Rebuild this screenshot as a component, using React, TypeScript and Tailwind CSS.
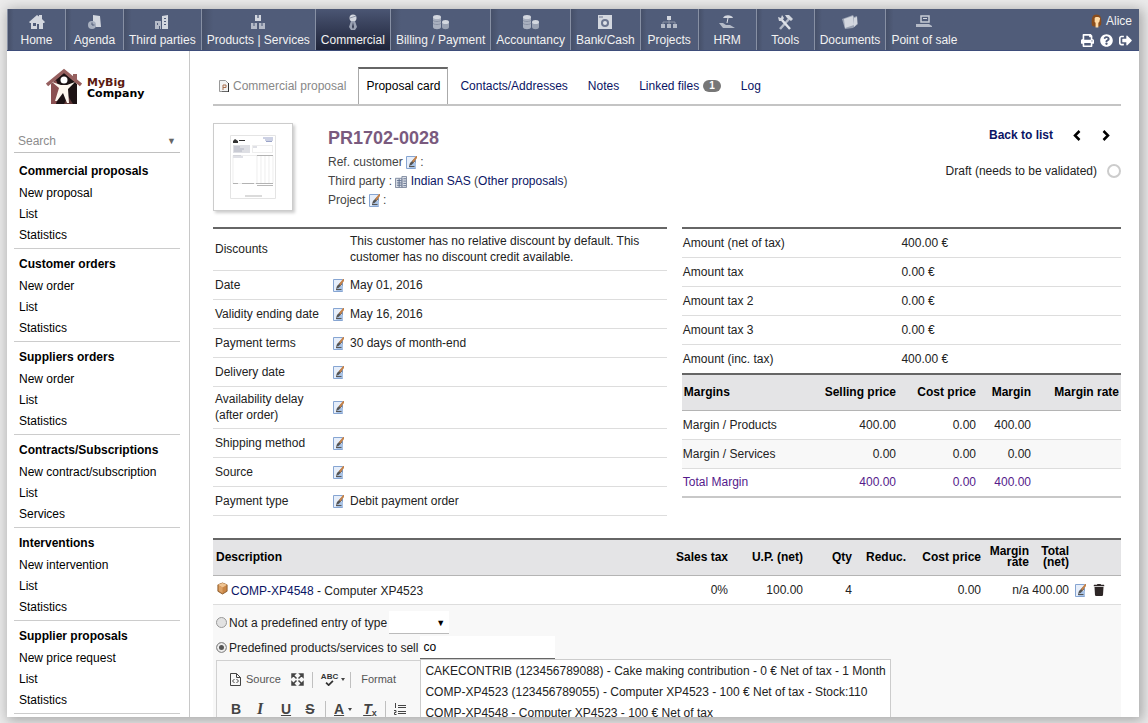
import React from 'react';
import { FaPrint, FaQuestionCircle, FaSignOutAlt, FaTrash } from 'react-icons/fa';

type IconName =
  | 'home' | 'agenda' | 'companies' | 'products' | 'commercial' | 'coins'
  | 'safe' | 'projects' | 'hrm' | 'tools' | 'folder' | 'pos';

interface MenuItem {
  label: string;
  icon: IconName;
  active?: boolean;
}

const MENU: MenuItem[] = [
  { label: 'Home', icon: 'home' },
  { label: 'Agenda', icon: 'agenda' },
  { label: 'Third parties', icon: 'companies' },
  { label: 'Products | Services', icon: 'products' },
  { label: 'Commercial', icon: 'commercial', active: true },
  { label: 'Billing / Payment', icon: 'coins' },
  { label: 'Accountancy', icon: 'coins' },
  { label: 'Bank/Cash', icon: 'safe' },
  { label: 'Projects', icon: 'projects' },
  { label: 'HRM', icon: 'hrm' },
  { label: 'Tools', icon: 'tools' },
  { label: 'Documents', icon: 'folder' },
  { label: 'Point of sale', icon: 'pos' },
];

const SIDE_MENU = [
  { title: 'Commercial proposals', links: ['New proposal', 'List', 'Statistics'] },
  { title: 'Customer orders', links: ['New order', 'List', 'Statistics'] },
  { title: 'Suppliers orders', links: ['New order', 'List', 'Statistics'] },
  { title: 'Contracts/Subscriptions', links: ['New contract/subscription', 'List', 'Services'] },
  { title: 'Interventions', links: ['New intervention', 'List', 'Statistics'] },
  { title: 'Supplier proposals', links: ['New price request', 'List', 'Statistics'] },
];

const FIELDS = [
  { label: 'Discounts', value: 'This customer has no relative discount by default. This customer has no discount credit available.', tall: true },
  { label: 'Date', value: 'May 01, 2016', edit: true },
  { label: 'Validity ending date', value: 'May 16, 2016', edit: true },
  { label: 'Payment terms', value: '30 days of month-end', edit: true },
  { label: 'Delivery date', value: '', edit: true },
  { label: 'Availability delay (after order)', value: '', edit: true, tall: true },
  { label: 'Shipping method', value: '', edit: true },
  { label: 'Source', value: '', edit: true },
  { label: 'Payment type', value: 'Debit payment order', edit: true },
];

const AMOUNTS = [
  ['Amount (net of tax)', '400.00 €'],
  ['Amount tax', '0.00 €'],
  ['Amount tax 2', '0.00 €'],
  ['Amount tax 3', '0.00 €'],
  ['Amount (inc. tax)', '400.00 €'],
];

const MARGINS = [
  ['Margin / Products', '400.00', '0.00', '400.00'],
  ['Margin / Services', '0.00', '0.00', '0.00'],
  ['Total Margin', '400.00', '0.00', '400.00'],
];

const SUGGESTIONS = [
  'CAKECONTRIB (123456789088) - Cake making contribution - 0 € Net of tax - 1 Month',
  'COMP-XP4523 (123456789055) - Computer XP4523 - 100 € Net of tax - Stock:110',
  'COMP-XP4548 - Computer XP4523 - 100 € Net of tax',
];

const MENU_SHAPES: Record<IconName, React.ReactNode> = {
  home: (
    <>
      <path d="M0 8 L8 1 L10 2.500 V1 H13 V5 L16 8 L15 9 H14 V15 H10 V10 H8 V15 H2 V9 H1 Z" />
      <path d="M4 9h3v3H4z" fill="#505c79" />
    </>
  ),
  agenda: (
    <>
      <path d="M6 1 L13 2 L14 13 H9 L6 8 Z" />
      <circle cx="5" cy="11" r="4" fill="#a9b1c0" />
      <path d="M5 8.500V11h2.500" stroke="#505c79" fill="none" />
    </>
  ),
  companies: (
    <>
      <path d="M1 7h6v8H1z" fill="#b4bac7" />
      <path d="M8 2l6-1v14H8z" />
      <path d="M3 9h1v2H3zM5 12h1v3H5zM10 4h2v1h-2zM10 7h2v1h-2zM10 10h2v1h-2z" fill="#505c79" />
    </>
  ),
  products: (
    <>
      <path d="M5 1h6v6H5z" />
      <path d="M1 9h6v6H1zM9 9h6v6H9z" fill="#b4bac7" />
      <path d="M7 1h2v3H7zM3 9h2v3H3zM11 9h2v3h-2z" fill="#7d879d" />
    </>
  ),
  commercial: (
    <>
      <circle cx="8" cy="4" r="3.500" />
      <path d="M6 7h4l2 6-2 3H6l-2-3z" fill="#9aa2b3" />
      <path d="M8 8l1 5-1 2-1-2z" fill="#343b52" />
      <path d="M5 4l6-2" stroke="#8b93a6" />
    </>
  ),
  coins: (
    <>
      <path d="M0 3v10c0 3 8 3 8 0V3z" fill="#a9b0bf" />
      <ellipse cx="4" cy="3" rx="4" ry="2" />
      <path d="M0 6c0 2 8 2 8 0M0 9c0 2 8 2 8 0" stroke="#8b93a6" fill="none" />
      <path d="M9 8v5c0 3 7 3 7 0V8z" fill="#9aa2b3" />
      <ellipse cx="12.500" cy="8" rx="3.500" ry="2" />
    </>
  ),
  safe: (
    <>
      <path d="M1 1h14v14H1z" />
      <circle cx="8" cy="9" r="4" fill="#6c7690" />
      <circle cx="8" cy="9" r="2" fill="#dfe2e8" />
      <path d="M2 3h4" stroke="#6c7690" />
    </>
  ),
  projects: (
    <>
      <path d="M6 2h4v4H6z" />
      <path d="M0 10h4v4H0zM6 10h4v4H6zM12 10h4v4h-4z" fill="#b4bac7" />
      <path d="M8 6v4M2 10V8h12v2" stroke="#8b93a6" fill="none" />
    </>
  ),
  hrm: (
    <>
      <path d="M4 4c2-4 9-3 10 0z" />
      <path d="M9 4l-1 5" stroke="#dfe2e8" />
      <path d="M0 9l4 0 3 2h4l5 3H4z" fill="#b4bac7" />
    </>
  ),
  tools: (
    <>
      <path d="M3 15L12 5" stroke="#b4bac7" strokeWidth="2.500" />
      <path d="M13 15L4 5" stroke="#dfe2e8" strokeWidth="2.500" />
      <path d="M1 3l3 1 1-3 2 3-2 3H2zM8 1h4l4 4-2 2-4-3z" />
    </>
  ),
  folder: (
    <>
      <path d="M0 5l11-4 1 2 3-1 1 8-5 4-8 1z" fill="#9aa2b3" />
      <path d="M2 5l9-3 1 9-9 3zM12 4l3-1v7l-3 3z" />
    </>
  ),
  pos: (
    <>
      <path d="M5 2h8v6H5z" fill="none" stroke="#c6cbd5" strokeWidth="1.500" />
      <path d="M7 4h4v1H7z" />
      <path d="M0 10h13l3 2v1H0z" fill="#b4bac7" />
    </>
  ),
};

const MenuIcon: React.FC<{ name: IconName }> = ({ name }) => (
  <svg viewBox="0 0 16 16" className="h-4 w-4" fill="#d3d7df" aria-hidden="true">
    {MENU_SHAPES[name]}
  </svg>
);

const EditIcon: React.FC = () => (
  <svg viewBox="0 0 11 13" className="inline-block h-[13px] w-[11px] align-middle" aria-hidden="true">
    <path d="M.5.5h9v12h-9z" fill="#e6eefa" stroke="#86a5d2" />
    <path d="M6 7h4v5H3z" fill="#a9c3e6" />
    <path d="M3 10l1-3 4-4 1.500 2-4 4z" fill="#555" />
    <path d="M6 5l4-5h1v2L7.500 6.500z" fill="#c4824a" />
    <path d="M3 10.500h5.500" stroke="#555" />
  </svg>
);

const EditButton: React.FC<{ label: string }> = ({ label }) => (
  <button type="button" aria-label={label} className="inline-flex align-middle">
    <EditIcon />
  </button>
);

const Chevron: React.FC<{ path: string }> = ({ path }) => (
  <svg viewBox="0 0 8 11" className="h-[11px] w-2" fill="none" stroke="#000" strokeWidth="2.500" aria-hidden="true">
    <path d={path} />
  </svg>
);

const Logo: React.FC = () => (
  <a href="#" className="flex items-center gap-[5px]" aria-label="MyBig Company">
    <svg viewBox="0 0 36 36" className="h-9 w-9" aria-hidden="true">
      <path d="M27 6h4v9h-4z" fill="#96605f" />
      <path d="M5 16L18 4l13 12v20H5z" fill="#1c1214" />
      <path d="M5 16l5-4 4 10-4 14H5z" fill="#8a4f50" />
      <path d="M22 28l5 8h-9z" fill="#5c3535" />
      <path d="M1 17L18 3l17 14" fill="none" stroke="#96605f" strokeWidth="3.500" />
      <circle cx="18" cy="12" r="3.500" fill="#fff" />
      <path d="M6 14l9 3h6l8-3-7 7 1 14-2 0-4-10-6 8-2 0 4-13z" fill="#fdf6ee" />
    </svg>
    <span className="mt-1 font-['DejaVu_Sans',sans-serif] text-[11px] leading-[11px] font-bold text-black">
      <span className="block text-[#5b1a10]">MyBig</span>
      <span className="block">Company</span>
    </span>
  </a>
);

const TopBar: React.FC = () => (
  <header className="flex h-[42px] shrink-0 justify-between border-b border-[#3e4d7a] bg-[#505c79] text-xs text-[#f2f2f2]">
    <nav className="flex">
      {MENU.map((item) => (
        <a
          key={item.label}
          href="#"
          className={`flex min-w-[58px] flex-col items-center gap-[2px] border-l border-l-[#8790a4] px-[5px] pt-[5px] ${
            item.active ? 'bg-linear-to-b from-[#4b5674] to-[#1f2439]' : 'bg-linear-to-r from-[#465069] to-[#505c79] to-10%'
          }`}
        >
          <MenuIcon name={item.icon} />
          <span className="leading-4 whitespace-nowrap">{item.label}</span>
        </a>
      ))}
    </nav>
    <div className="flex flex-col items-end gap-[5px] pt-1 pr-[7px]">
      <a href="#" className="flex items-center gap-1 leading-4">
        <svg viewBox="0 0 12 14" className="h-[14px] w-[11px]" aria-hidden="true">
          <path d="M1 12C0 3 2 0 6 0s6 3 5 11l-2 2H3z" fill="#8a4d1c" />
          <path d="M4 4c0-2 5-2 6 0l-1 4-1 1v5H5V9L4 8z" fill="#ffdba6" />
        </svg>
        Alice
      </a>
      <div className="flex items-center gap-[6px] text-[13px] text-white">
        <button type="button" aria-label="Print"><FaPrint /></button>
        <button type="button" aria-label="Help"><FaQuestionCircle /></button>
        <button type="button" aria-label="Logout"><FaSignOutAlt /></button>
      </div>
    </div>
  </header>
);

const Sidebar: React.FC = () => (
  <aside className="w-[183px] shrink-0 overflow-hidden border-r border-[#c8c8c8] pr-[9px] pl-[7px] text-black">
    <div className="pt-[17px] pl-8">
      <Logo />
    </div>
    <div className="mt-[25px] mb-[3px] flex h-[24px] items-center justify-between border-b border-[#c0c0c0] pr-1 pl-1">
      <input type="text" aria-label="Search" placeholder="Search" className="w-28 outline-none placeholder:text-[#8c8c8c]" />
      <button type="button" aria-label="Search in" className="text-[9px] text-[#666]">▼</button>
    </div>
    {SIDE_MENU.map((group) => (
      <div key={group.title} className="border-b border-[#ccc] px-[5px] pt-1 pb-[2px]">
        <a href="#" className="block leading-[23px] font-bold whitespace-nowrap">{group.title}</a>
        {group.links.map((link) => (
          <a key={link} href="#" className="block leading-[21px] whitespace-nowrap">{link}</a>
        ))}
      </div>
    ))}
  </aside>
);

const Tabs: React.FC = () => (
  <nav className="flex h-[39px] items-stretch border-b-2 border-[#c4c4c4] leading-[38px] text-[#0a1464]">
    <span className="flex items-center gap-1 pr-3 pl-[6px] text-[#888]">
      <svg viewBox="0 0 10 12" className="h-3 w-[10px]" aria-hidden="true">
        <path d="M.5.5h6l3 3v8h-9z" fill="#f3f3f3" stroke="#999" />
        <path d="M9.500 3v9H3" fill="none" stroke="#333" />
        <path d="M4 10V5h3v2.500H4" fill="none" stroke="#a86f4c" />
      </svg>
      Commercial proposal
    </span>
    <a href="#" className="border-x border-t-2 border-x-[#aaa] border-t-[#666] px-[7px] leading-[34px] text-black">Proposal card</a>
    <a href="#" className="ml-3">Contacts/Addresses</a>
    <a href="#" className="ml-5">Notes</a>
    <a href="#" className="ml-5 flex items-center gap-1">
      Linked files
      <span className="rounded-full bg-[#777] px-[6px] text-[10px] leading-3 font-bold text-white">1</span>
    </a>
    <a href="#" className="ml-5">Log</a>
  </nav>
);

const Thumbnail: React.FC = () => (
  <a href="#" aria-label="Preview" className="flex h-[88px] w-20 items-center justify-center border border-[#ccc] bg-white shadow-[2px_2px_3px_#ccc]">
    <svg viewBox="0 0 46 64" className="h-16 w-[46px]" aria-hidden="true">
      <path d="M.5.5h45v63H.5z" fill="#fff" stroke="#e4e4e4" />
      <path d="M3 6l2-2 3 2v2H3zM9 5h6v1H9z" fill="#333" />
      <path d="M33 3h10M35 5h8M36 6.500h6" stroke="#9aa3c8" />
      <path d="M3 10h17v8H3z" fill="#dedfe4" />
      <path d="M4 12h6M4 14h10M4 16h8M23 12h4M3 20.500h8M3 22h10" stroke="#a4a8b8" strokeWidth=".7" />
      <path d="M22.500 10.500h20v7h-20zM3 20.500h40v28H3zM27 20v28M31 20v28M35 20v28M39 20v28" fill="none" stroke="#e2e2e2" strokeWidth=".6" />
      <path d="M27 20.500h16M3 48.500h5M12 48.500h12M26 48.500h17M27 50.500h16M15 61h17" stroke="#999" strokeWidth=".7" />
    </svg>
  </a>
);

const Banner: React.FC = () => (
  <div className="flex items-start pt-[17px]">
    <Thumbnail />
    <div className="ml-[35px] flex-1 leading-[19px] text-[#444]">
      <h1 className="mt-1 mb-1 text-lg leading-[22px] font-bold text-[#7a5a7e]">PR1702-0028</h1>
      <div>Ref. customer <EditButton label="Edit customer ref" /> :</div>
      <div>
        Third party :{' '}
        <svg viewBox="0 0 13 13" className="inline-block h-3 w-3 align-middle" aria-hidden="true">
          <path d="M.5 2.500h7v10h-7zM7.500.5h5v12h-5z" fill="#dfe3ea" stroke="#7c879c" />
          <path d="M2 5h5M2 7.500h5M2 10h5M9 3h3M9 5.500h3M9 8h3M9 10.500h3M4.500 3v9" stroke="#5a6a8a" />
        </svg>{' '}
        <a href="#" className="text-[#0a1464]">Indian SAS</a> (<a href="#" className="text-[#0a1464]">Other proposals</a>)
      </div>
      <div>Project <EditButton label="Edit project" /> :</div>
    </div>
    <div className="flex flex-col items-end">
      <div className="mt-1 flex items-center pr-[11px] leading-4">
        <a href="#" className="mr-5 font-bold text-[#0a1464]">Back to list</a>
        <button type="button" aria-label="Previous" className="mr-[21px]"><Chevron path="M6.500 1L2 5.500 6.500 10" /></button>
        <button type="button" aria-label="Next"><Chevron path="M1.500 1L6 5.500 1.500 10" /></button>
      </div>
      <div className="mt-5 flex items-center gap-[10px] leading-4">
        Draft (needs to be validated)
        <span className="h-[14px] w-[14px] rounded-full border-2 border-[#ccc]" />
      </div>
    </div>
  </div>
);

const FieldsTable: React.FC = () => (
  <table className="w-full table-fixed border-t-2 border-[#666] leading-4">
    <colgroup>
      <col className="w-[120px]" />
      <col className="w-[15px]" />
      <col />
    </colgroup>
    <tbody>
      {FIELDS.map((field) => (
        <tr key={field.label} className={`border-b border-[#ddd] ${field.tall ? 'h-[42px]' : 'h-[29px]'}`}>
          <th scope="row" className="pr-2 pl-[2px] text-left font-normal">{field.label}</th>
          <td>{field.edit && <EditButton label={`Edit ${field.label}`} />}</td>
          <td className="pr-6 pl-[2px]">{field.value}</td>
        </tr>
      ))}
    </tbody>
  </table>
);

const AmountTables: React.FC = () => (
  <div>
    <table className="w-full table-fixed border-t-2 border-[#666] leading-4">
      <tbody>
        {AMOUNTS.map(([label, value], index) => (
          <tr key={label} className={`h-[29px] ${index < AMOUNTS.length - 1 ? 'border-b border-[#ddd]' : ''}`}>
            <th scope="row" className="pl-[1px] text-left font-normal">{label}</th>
            <td>{value}</td>
          </tr>
        ))}
      </tbody>
    </table>
    <table className="w-full border-t-2 border-b-2 border-t-[#666] border-b-[#c8c8c8] text-right leading-4">
      <thead>
        <tr className="h-[36px] border-b border-[#b4b4b4] bg-[#e4e4e6] text-black">
          <th className="pl-[2px] text-left">Margins</th>
          <th>Selling price</th>
          <th className="w-20">Cost price</th>
          <th className="w-[55px]">Margin</th>
          <th className="w-[90px] pr-[2px]">Margin rate</th>
        </tr>
      </thead>
      <tbody>
        {MARGINS.map(([label, selling, cost, margin], index) => (
          <tr
            key={label}
            className={`h-[29px] border-b border-[#ddd] ${index === 1 ? 'bg-[#f8f8f8]' : ''} ${index === 2 ? 'text-[#551a8b]' : ''}`}
          >
            <td className="pl-[1px] text-left">{label}</td>
            <td>{selling}</td>
            <td>{cost}</td>
            <td>{margin}</td>
            <td />
          </tr>
        ))}
      </tbody>
    </table>
  </div>
);

const LinesTable: React.FC = () => (
  <table className="mt-[22px] w-full border-t-2 border-[#666] text-right leading-4">
    <thead>
      <tr className="h-[37px] border-b border-[#b4b4b4] bg-[#e4e4e6] text-black">
        <th className="pl-[3px] text-left">Description</th>
        <th className="w-20">Sales tax</th>
        <th className="w-[75px]">U.P. (net)</th>
        <th className="w-[49px]">Qty</th>
        <th className="w-[54px]">Reduc.</th>
        <th className="w-[75px]">Cost price</th>
        <th className="w-[48px] pl-1 leading-[11px]">Margin rate</th>
        <th className="w-10 leading-[11px]">Total (net)</th>
        <th className="w-[52px]" aria-label="Actions" />
      </tr>
    </thead>
    <tbody>
      <tr className="h-[29px] border-b border-[#ddd]">
        <td className="pl-1 text-left">
          <svg viewBox="0 0 12 14" className="mr-[3px] inline-block h-[13px] w-[11px] align-baseline" aria-hidden="true">
            <path d="M6 1l5 2v7l-5 3-5-3V3z" fill="#c98646" stroke="#8a5a2b" />
            <path d="M6 1l5 2-5 3-5-3z" fill="#f0c492" />
            <path d="M2 4l4 2v6L2 9.500z" fill="#dda368" />
          </svg>
          <a href="#" className="text-[#0a1464]">COMP-XP4548</a> - Computer XP4523
        </td>
        <td>0%</td>
        <td>100.00</td>
        <td>4</td>
        <td />
        <td>0.00</td>
        <td>n/a</td>
        <td>400.00</td>
        <td>
          <div className="flex items-center gap-[7px] pl-[6px] text-xs text-[#2d2626]">
            <EditButton label="Edit line" />
            <button type="button" aria-label="Delete line"><FaTrash /></button>
          </div>
        </td>
      </tr>
    </tbody>
  </table>
);

const Separator: React.FC = () => <span className="h-4 w-px bg-[#c0c0c0]" />;

const EditorToolbar: React.FC = () => (
  <div className="w-[600px] max-w-full border border-[#d1d1d1] text-[#555]">
    <div className="flex h-[37px] items-center pl-[13px] text-[11px]">
      <button type="button" className="flex items-center gap-[5px]">
        <svg viewBox="0 0 11 13" className="h-[13px] w-[11px]" fill="none" stroke="#444" aria-hidden="true">
          <path d="M.5.5h6l4 4v8H.5zM6.500.5v4h4M4.500 6l-2 2 2 2M6.500 6l2 2-2 2" />
        </svg>
        Source
      </button>
      <button type="button" aria-label="Maximize" className="ml-[10px]">
        <svg viewBox="0 0 13 13" className="h-[13px] w-[13px]" stroke="#444" strokeWidth="1.500" fill="#444" aria-hidden="true">
          <path d="M1 1h3L1 4zM12 1v3L9 1zM1 12V9l3 3zM12 12H9l3-3zM2 2l3.500 3.500M11 2L7.500 5.500M2 11l3.500-3.500M11 11L7.500 7.500" />
        </svg>
      </button>
      <span className="ml-2 flex"><Separator /></span>
      <button type="button" aria-label="Spell check" className="ml-2 flex items-center gap-[3px] text-[#333]">
        <span className="flex flex-col items-center text-[8px] leading-[7px] font-bold">
          ABC
          <svg viewBox="0 0 10 7" className="h-[6px] w-[9px]" fill="none" stroke="#333" strokeWidth="2" aria-hidden="true">
            <path d="M1 3l3 3 5-5" />
          </svg>
        </span>
        <span className="border-x-2 border-t-3 border-x-transparent border-t-[#444]" />
      </button>
      <span className="ml-[5px] flex"><Separator /></span>
      <button type="button" className="ml-[10px]">Format</button>
    </div>
    <div className="flex h-[22px] items-center pl-[13px] text-sm text-[#444]">
      <button type="button" aria-label="Bold" className="w-3 font-bold">B</button>
      <button type="button" aria-label="Italic" className="ml-3 w-3 font-['Liberation_Serif',serif] text-base font-bold italic">I</button>
      <button type="button" aria-label="Underline" className="ml-[14px] w-3 font-bold underline">U</button>
      <button type="button" aria-label="Strike" className="ml-3 w-3 font-bold line-through">S</button>
      <span className="ml-[9px] flex"><Separator /></span>
      <button type="button" aria-label="Text color" className="ml-2 flex items-center gap-1 font-bold underline">
        A
        <span className="border-x-2 border-t-3 border-x-transparent border-t-[#444]" />
      </button>
      <button type="button" aria-label="Remove format" className="ml-[11px] flex items-end font-bold underline">
        <i>T</i>
        <span className="text-[9px] leading-3">x</span>
      </button>
      <span className="ml-2 flex"><Separator /></span>
      <button type="button" aria-label="Numbered list" className="ml-2">
        <svg viewBox="0 0 12 12" className="h-3 w-3" fill="none" stroke="#444" aria-hidden="true">
          <path d="M4 2.500h8M4 4.500h8M4 8.500h8M4 10.500h8M1.500 0v5M0 7.500h2v2H.5v2h2" />
        </svg>
      </button>
    </div>
    <textarea aria-label="Description" className="h-20 w-full bg-white" />
  </div>
);

const Radio: React.FC<{ id: string; checked?: boolean }> = ({ id, checked }) => (
  <input
    id={id}
    type="radio"
    name="line-type"
    defaultChecked={checked}
    className="mr-[2px] h-[11px] w-[11px] appearance-none rounded-full border border-[#999] bg-[#e2e2e2] checked:bg-[#555] checked:shadow-[inset_0_0_0_2px_#eee]"
  />
);

const AddLineForm: React.FC = () => (
  <form className="bg-[#f8f8f8] pt-[6px] pl-[3px]">
    <div className="flex h-[23px] items-center">
      <Radio id="free-entry" />
      <label htmlFor="free-entry">Not a predefined entry of type</label>
      <span className="relative ml-[2px]">
        <select aria-label="Entry type" className="block h-[23px] w-[60px] appearance-none border-b border-[#bbb] bg-white">
          <option />
          <option value="product">Product</option>
          <option value="service">Service</option>
        </select>
        <span className="pointer-events-none absolute top-1 right-1 text-[9px] leading-4 text-black">▼</span>
      </span>
    </div>
    <div className="mt-[2px] flex h-[23px] items-center">
      <Radio id="predefined" checked />
      <label htmlFor="predefined">Predefined products/services to sell</label>
      <div className="relative ml-[2px]">
        <input
          type="text"
          aria-label="Product search"
          defaultValue="co"
          autoFocus
          className="block h-[23px] w-[135px] border-b border-[#666] bg-white px-[3px] text-black outline-none"
        />
        <ul className="absolute top-full left-0 z-10 border border-[#ccc] bg-white px-1 pt-[1px]">
          {SUGGESTIONS.map((item) => (
            <li key={item} className="leading-[21px] whitespace-nowrap">{item}</li>
          ))}
        </ul>
      </div>
    </div>
    <div className="mt-[1px]">
      <EditorToolbar />
    </div>
  </form>
);

const App: React.FC = () => {
  return (
    <div className="h-screen overflow-hidden bg-[#ececec] pt-[9px] pr-[9px] pb-[6px] pl-[7px] font-['Liberation_Sans',Arial,sans-serif] text-xs text-[#222]">
      <div className="flex h-full flex-col overflow-hidden bg-white shadow-[2px_2px_12px_2px_#aaa]">
        <TopBar />
        <div className="flex min-h-0 flex-1">
          <Sidebar />
          <main className="min-w-0 flex-1 overflow-hidden pt-4 pr-[18px] pl-[23px]">
            <Tabs />
            <Banner />
            <div className="mt-4 grid grid-cols-[31fr_30fr] items-start gap-[15px]">
              <FieldsTable />
              <AmountTables />
            </div>
            <LinesTable />
            <AddLineForm />
          </main>
        </div>
      </div>
    </div>
  );
};

export default App;
